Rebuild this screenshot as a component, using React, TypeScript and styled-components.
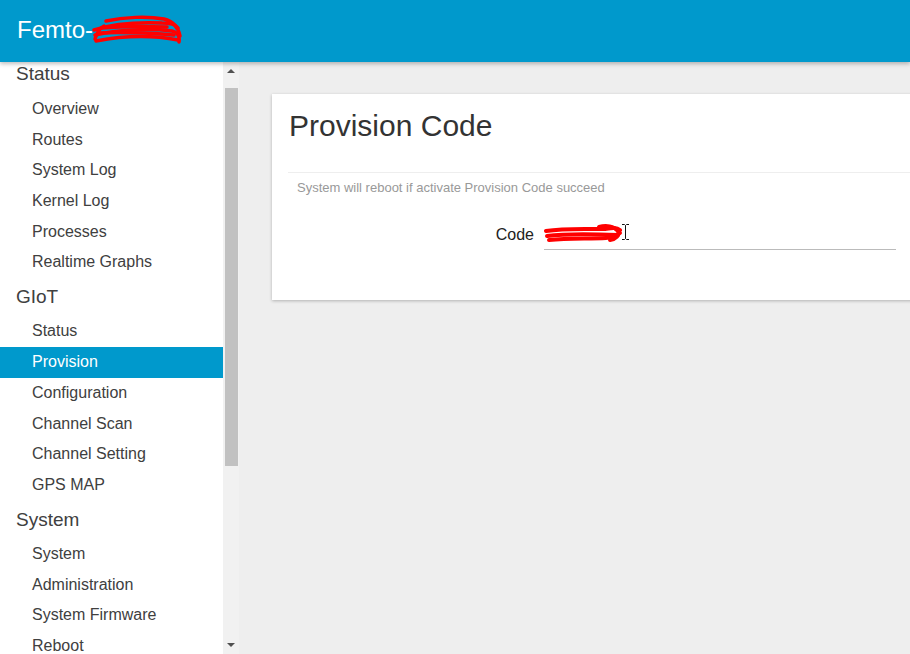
import React from "react";
import styled, { createGlobalStyle } from "styled-components";

const Global = createGlobalStyle`
  html, body { margin: 0; padding: 0; height: 100%; overflow: hidden; }
  body { font-family: "Liberation Sans", Arial, sans-serif; background: #eeeeee; }
  #root { height: 100%; }
`;

const Page = styled.div`
  height: 100vh;
  display: flex;
  flex-direction: column;
`;

const Header = styled.header`
  height: 62px;
  flex-shrink: 0;
  background: #0099cc;
  box-shadow: 0 2px 4px rgba(0, 0, 0, 0.25);
  position: relative;
  z-index: 2;
  display: flex;
  align-items: center;
  padding-left: 17px;
`;

const Brand = styled.div`
  color: #ffffff;
  font-size: 24px;
  display: flex;
  align-items: center;
  margin-top: -3px;
`;

const Body = styled.div`
  flex: 1;
  min-height: 0;
  display: flex;
`;

const Sidebar = styled.nav`
  width: 239px;
  flex-shrink: 0;
  display: flex;
`;

const Menu = styled.div`
  width: 223px;
  background: #ffffff;
  overflow: hidden;
`;

const MenuInner = styled.div`
  margin-top: -7px;
`;

const Heading = styled.div`
  height: 38.5px;
  display: flex;
  align-items: center;
  padding-left: 16px;
  font-size: 19px;
  color: #404040;
`;

const Item = styled.div<{ $active?: boolean }>`
  height: 30.7px;
  display: flex;
  align-items: center;
  padding-left: 32px;
  font-size: 16px;
  color: ${(p) => (p.$active ? "#ffffff" : "#404040")};
  background: ${(p) => (p.$active ? "#0099cc" : "transparent")};
`;

const Scrollbar = styled.div`
  width: 16px;
  background: #f1f1f1;
  display: flex;
  flex-direction: column;
`;

const ScrollButton = styled.div<{ $down?: boolean }>`
  height: 17px;
  display: flex;
  justify-content: center;
  align-items: ${(p) => (p.$down ? "flex-start" : "flex-end")};
  padding: ${(p) => (p.$down ? "6px 0 0" : "0 0 6px")};
  box-sizing: border-box;
`;

const Track = styled.div`
  flex: 1;
  padding: 9px 1px 0 2px;
`;

const Thumb = styled.div`
  height: 378px;
  background: #c1c1c1;
`;

const Main = styled.main`
  flex: 1;
  min-width: 0;
  overflow: hidden;
  padding: 32px 0 0 33px;
`;

const Card = styled.section`
  width: 700px;
  height: 206px;
  background: #ffffff;
  box-shadow: 0 1px 3px rgba(0, 0, 0, 0.25);
  box-sizing: border-box;
`;

const Title = styled.h2`
  margin: 0;
  padding: 14px 17px 0;
  font-size: 30px;
  line-height: 36px;
  font-weight: normal;
  color: #333333;
`;

const Divider = styled.hr`
  border: none;
  border-top: 1px solid #eeeeee;
  margin: 28px 0 0 16px;
`;

const Description = styled.p`
  margin: 0;
  padding: 7px 0 0 25px;
  font-size: 13px;
  line-height: 15px;
  color: #999999;
`;

const FormRow = styled.div`
  margin-top: 23px;
  padding-left: 16px;
  height: 32px;
  display: flex;
  align-items: center;
`;

const Label = styled.label`
  width: 256px;
  flex-shrink: 0;
  padding-right: 10px;
  box-sizing: border-box;
  text-align: right;
  font-size: 16px;
  color: #222222;
  padding-top: 2px;
`;

const Field = styled.div`
  position: relative;
  width: 352px;
  height: 32px;
  flex-shrink: 0;
`;

const Input = styled.input`
  width: 100%;
  height: 100%;
  box-sizing: border-box;
  border: none;
  border-bottom: 1px solid #bbbbbb;
  outline: none;
  font-family: inherit;
  font-size: 16px;
  padding: 0;
  background: transparent;
`;

const Redaction = styled.svg`
  position: absolute;
  left: 0;
  top: 5px;
`;

const Cursor = styled.svg`
  position: absolute;
  left: 78px;
  top: 6px;
`;

const HeaderScribble = () => (
  <svg width="92" height="32" viewBox="0 0 92 32" style={{ marginLeft: -1 }}>
    <g fill="none" stroke="#ff0000" strokeWidth="3.5" strokeLinecap="round" strokeLinejoin="round">
      <path d="M2 16 C20 10 45 8 70 9 C78 9 84 11 86 14" />
      <path d="M14 7 C32 3 55 2 72 5 C80 7 86 12 88 22" />
      <path d="M3 21 C25 16 55 14 80 17 C85 18 88 22 87 28" />
      <path d="M4 27 C30 22 60 21 86 26" />
      <path d="M10 14 C30 12 50 12 75 13 M8 19 C30 18 55 19 82 21" />
      <path d="M3 25 C5 18 8 14 12 12" />
    </g>
  </svg>
);

const CodeScribble = () => (
  <Redaction width="80" height="22" viewBox="0 0 80 22">
    <g fill="none" stroke="#ff0000" strokeWidth="4" strokeLinecap="round" strokeLinejoin="round">
      <path d="M2 8 C20 5 40 6 60 6 C68 5 72 4 76 7" />
      <path d="M3 13 C25 10 50 11 74 12" />
      <path d="M5 17 C25 15 45 16 62 15 C68 15 72 13 76 10" />
      <path d="M55 4 C62 2 70 3 74 8 C76 12 72 16 66 17" />
    </g>
  </Redaction>
);

const menu: { heading: string; items: string[] }[] = [
  { heading: "Status", items: ["Overview", "Routes", "System Log", "Kernel Log", "Processes", "Realtime Graphs"] },
  { heading: "GIoT", items: ["Status", "Provision", "Configuration", "Channel Scan", "Channel Setting", "GPS MAP"] },
  { heading: "System", items: ["System", "Administration", "System Firmware", "Reboot"] },
];

export default function App() {
  return (
    <>
      <Global />
      <Page>
        <Header>
          <Brand>
            <span>Femto-</span>
            <HeaderScribble />
          </Brand>
        </Header>
        <Body>
          <Sidebar>
            <Menu>
              <MenuInner>
                {menu.map((g) => (
                  <React.Fragment key={g.heading}>
                    <Heading>{g.heading}</Heading>
                    {g.items.map((it) => (
                      <Item key={it} $active={g.heading === "GIoT" && it === "Provision"}>
                        {it}
                      </Item>
                    ))}
                  </React.Fragment>
                ))}
              </MenuInner>
            </Menu>
            <Scrollbar>
              <ScrollButton>
                <svg width="8" height="4" viewBox="0 0 8 4">
                  <path d="M0 4 L4 0 L8 4 Z" fill="#505050" />
                </svg>
              </ScrollButton>
              <Track>
                <Thumb />
              </Track>
              <ScrollButton $down>
                <svg width="8" height="4" viewBox="0 0 8 4">
                  <path d="M0 0 L8 0 L4 4 Z" fill="#505050" />
                </svg>
              </ScrollButton>
            </Scrollbar>
          </Sidebar>
          <Main>
            <Card>
              <Title>Provision Code</Title>
              <Divider />
              <Description>System will reboot if activate Provision Code succeed</Description>
              <FormRow>
                <Label htmlFor="code">Code</Label>
                <Field>
                  <Input id="code" />
                  <CodeScribble />
                  <Cursor width="7" height="16" viewBox="0 0 7 16">
                    <path d="M0 0.5 H2.5 L3.5 1.5 L4.5 0.5 H7 M3.5 1.5 V14.5 M0 15.5 H2.5 L3.5 14.5 L4.5 15.5 H7" fill="none" stroke="#111" strokeWidth="1" />
                  </Cursor>
                </Field>
              </FormRow>
            </Card>
          </Main>
        </Body>
      </Page>
    </>
  );
}
